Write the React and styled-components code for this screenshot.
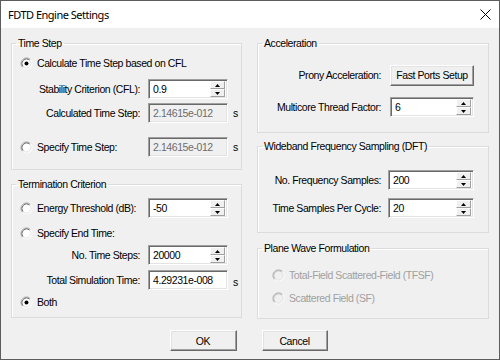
import styled, { createGlobalStyle } from 'styled-components'

const GlobalStyle = createGlobalStyle`
  html, body {
    margin: 0;
    padding: 0;
    background: #ffffff;
  }
  body {
    font-family: "Liberation Sans", Arial, sans-serif;
    font-size: 10.5px;
    letter-spacing: -0.42px;
    color: #000;
  }
`

const Window = styled.div`
  width: 500px;
  height: 360px;
  box-sizing: border-box;
  border: 1px solid #5c5c5c;
  background: #f0f0f0;
  display: flex;
  flex-direction: column;
`

const TitleBar = styled.div`
  height: 27px;
  flex-shrink: 0;
  background: #ffffff;
  display: flex;
  align-items: center;
  justify-content: space-between;
  padding: 0 8px 0 7px;
  font-family: "Noto Sans", "Open Sans", sans-serif;
  font-size: 11px;
  letter-spacing: -0.5px;
`

const Body = styled.div`
  flex: 1;
  display: flex;
  flex-direction: column;
  padding: 9px 11px 0 10px;
`

const Columns = styled.div`
  display: grid;
  grid-template-columns: 231px 232px;
  column-gap: 15px;
  align-items: start;
`

const Column = styled.div`
  display: flex;
  flex-direction: column;
  gap: ${({ $gap }) => $gap || 8}px;
`

const Group = styled.fieldset`
  margin: 0;
  padding: 0 ${({ $padRight }) => $padRight ?? 4}px ${({ $padBottom }) => $padBottom || 0}px
    ${({ $padLeft }) => $padLeft ?? 8}px;
  border: 1px solid #dcdcdc;
  box-shadow: inset 1px 1px 0 #ffffff;
  min-width: 0;
  display: flex;
  flex-direction: column;
  margin-top: ${({ $top }) => $top || 0}px;
`

const Legend = styled.legend`
  padding: 0 2px;
  margin-left: ${({ $shift }) => $shift ?? -4}px;
  line-height: 13px;
  height: 13px;
`

const Row = styled.div`
  display: grid;
  grid-template-columns: ${({ $cols }) => $cols || '1fr'};
  align-items: center;
  height: 22px;
  margin-top: ${({ $mt }) => $mt || 0}px;
`

const Label = styled.span`
  text-align: right;
  padding-right: ${({ $pad }) => $pad ?? 8}px;
  white-space: nowrap;
`

const Unit = styled.span`
  padding-left: 5px;
  padding-top: ${({ $low }) => ($low ? 4 : 0)}px;
`

const RadioLabel = styled.label`
  display: flex;
  align-items: center;
  gap: 4px;
  white-space: nowrap;
  color: ${({ $disabled }) => ($disabled ? '#a0a0a0' : '#000')};
`

const FieldBox = styled.div`
  height: 20px;
  box-sizing: border-box;
  display: flex;
  align-items: stretch;
  border: 1px solid;
  border-color: #a0a0a0 #ffffff #ffffff #a0a0a0;
  box-shadow: inset 1px 1px 0 #696969, inset -1px -1px 0 #e3e3e3;
  background: ${({ $disabled }) => ($disabled ? '#f0f0f0' : '#ffffff')};
  color: ${({ $disabled }) => ($disabled ? '#6d6d6d' : '#000')};
  padding: 1px 2px 1px 1px;
`

const FieldText = styled.span`
  flex: 1;
  display: flex;
  align-items: center;
  padding-left: 3px;
  white-space: nowrap;
`

const Spinner = styled.div`
  width: 15px;
  display: flex;
  flex-direction: column;
`

const SpinButton = styled.div`
  flex: 1;
  box-sizing: border-box;
  background: #f0f0f0;
  border: 1px solid;
  border-color: #ffffff #a0a0a0 #a0a0a0 #ffffff;
  display: flex;
  align-items: center;
  justify-content: center;
`

const Button = styled.div`
  box-sizing: border-box;
  height: 21px;
  width: ${({ $w }) => $w || 66}px;
  background: #f0f0f0;
  border: 1px solid;
  border-color: #ffffff #696969 #696969 #ffffff;
  box-shadow: inset -1px -1px 0 #a0a0a0, inset 1px 1px 0 #e3e3e3;
  display: flex;
  align-items: center;
  justify-content: center;
  white-space: nowrap;
`

const ButtonBar = styled.div`
  display: flex;
  justify-content: center;
  gap: 25px;
  margin-top: 11px;
  padding-right: 2px;
`

const Arrow = ({ down }) => (
  <svg width="5" height="3" viewBox="0 0 5 3">
    <polygon points={down ? '0,0 5,0 2.5,3' : '0,3 5,3 2.5,0'} fill="#000" />
  </svg>
)

const Field = ({ value, disabled, spin }) => (
  <FieldBox $disabled={disabled}>
    <FieldText>{value}</FieldText>
    {spin && (
      <Spinner>
        <SpinButton>
          <Arrow />
        </SpinButton>
        <SpinButton>
          <Arrow down />
        </SpinButton>
      </Spinner>
    )}
  </FieldBox>
)

const Radio = ({ checked, disabled }) => (
  <svg width="13" height="13" viewBox="0 0 13 13">
    <circle cx="6.5" cy="6.5" r="5.5" fill={disabled ? '#f0f0f0' : '#ffffff'} />
    <path d="M2.61 10.39 A5.5 5.5 0 0 1 10.39 2.61" stroke="#a0a0a0" fill="none" />
    <path d="M10.39 2.61 A5.5 5.5 0 0 1 2.61 10.39" stroke="#ffffff" fill="none" />
    <path d="M3.32 9.68 A4.5 4.5 0 0 1 9.68 3.32" stroke={disabled ? '#c8c8c8' : '#696969'} fill="none" />
    <path d="M9.68 3.32 A4.5 4.5 0 0 1 3.32 9.68" stroke="#e3e3e3" fill="none" />
    {checked && <circle cx="6.5" cy="6.5" r="2" fill="#000" />}
  </svg>
)

const RadioItem = ({ checked, disabled, children }) => (
  <RadioLabel $disabled={disabled}>
    <Radio checked={checked} disabled={disabled} />
    {children}
  </RadioLabel>
)

const CloseIcon = () => (
  <svg width="11" height="11" viewBox="0 0 11 11">
    <path d="M0.5 0.5 L10.5 10.5 M10.5 0.5 L0.5 10.5" stroke="#000" strokeWidth="1" />
  </svg>
)

const LEFT = '1fr 80px 9px'
const RIGHT = '1fr 84px'
const RIGHT_WIDE = '1fr 86px'

const App = () => {
  return (
    <>
      <GlobalStyle />
      <Window>
        <TitleBar>
          <span>FDTD Engine Settings</span>
          <CloseIcon />
        </TitleBar>
        <Body>
          <Columns>
            <Column $gap={8}>
              <Group $padBottom={11}>
                <Legend>Time Step</Legend>
                <Row $mt={2}>
                  <RadioItem checked>Calculate Time Step based on CFL</RadioItem>
                </Row>
                <Row $mt={4} $cols={LEFT}>
                  <Label>Stability Criterion (CFL):</Label>
                  <Field value="0.9" spin />
                  <span />
                </Row>
                <Row $mt={2} $cols={LEFT}>
                  <Label>Calculated Time Step:</Label>
                  <Field value="2.14615e-012" disabled />
                  <Unit>s</Unit>
                </Row>
                <Row $mt={12} $cols={LEFT}>
                  <RadioItem>Specify Time Step:</RadioItem>
                  <Field value="2.14615e-012" disabled />
                  <Unit>s</Unit>
                </Row>
              </Group>
              <Group $padBottom={4}>
                <Legend>Termination Criterion</Legend>
                <Row $mt={6} $cols={LEFT}>
                  <RadioItem>Energy Threshold (dB):</RadioItem>
                  <Field value="-50" spin />
                  <span />
                </Row>
                <Row $mt={3}>
                  <RadioItem>Specify End Time:</RadioItem>
                </Row>
                <Row $cols={LEFT}>
                  <Label>No. Time Steps:</Label>
                  <Field value="20000" spin />
                  <span />
                </Row>
                <Row $mt={3} $cols={LEFT}>
                  <Label>Total Simulation Time:</Label>
                  <Field value="4.29231e-008" />
                  <Unit $low>s</Unit>
                </Row>
                <Row>
                  <RadioItem checked>Both</RadioItem>
                </Row>
              </Group>
            </Column>
            <Column $gap={7}>
              <Group $padBottom={14} $padRight={14}>
                <Legend>Acceleration</Legend>
                <Row $mt={14} $cols={RIGHT}>
                  <Label $pad={9}>Prony Acceleration:</Label>
                  <Button $w={84}>Fast Ports Setup</Button>
                </Row>
                <Row $mt={10} $cols={RIGHT}>
                  <Label $pad={9}>Multicore Thread Factor:</Label>
                  <Field value="6" spin />
                </Row>
              </Group>
              <Group $padBottom={13} $padRight={14}>
                <Legend>Wideband Frequency Sampling (DFT)</Legend>
                <Row $mt={16} $cols={RIGHT_WIDE}>
                  <Label $pad={7}>No. Frequency Samples:</Label>
                  <Field value="200" spin />
                </Row>
                <Row $mt={6} $cols={RIGHT_WIDE}>
                  <Label $pad={7}>Time Samples Per Cycle:</Label>
                  <Field value="20" spin />
                </Row>
              </Group>
              <Group $padBottom={9} $padLeft={14} $top={2}>
                <Legend $shift={-10}>Plane Wave Formulation</Legend>
                <Row $mt={9}>
                  <RadioItem disabled>Total-Field Scattered-Field (TFSF)</RadioItem>
                </Row>
                <Row $mt={1}>
                  <RadioItem disabled>Scattered Field (SF)</RadioItem>
                </Row>
              </Group>
            </Column>
          </Columns>
          <ButtonBar>
            <Button $w={67}>OK</Button>
            <Button $w={66}>Cancel</Button>
          </ButtonBar>
        </Body>
      </Window>
    </>
  )
}

export default App
